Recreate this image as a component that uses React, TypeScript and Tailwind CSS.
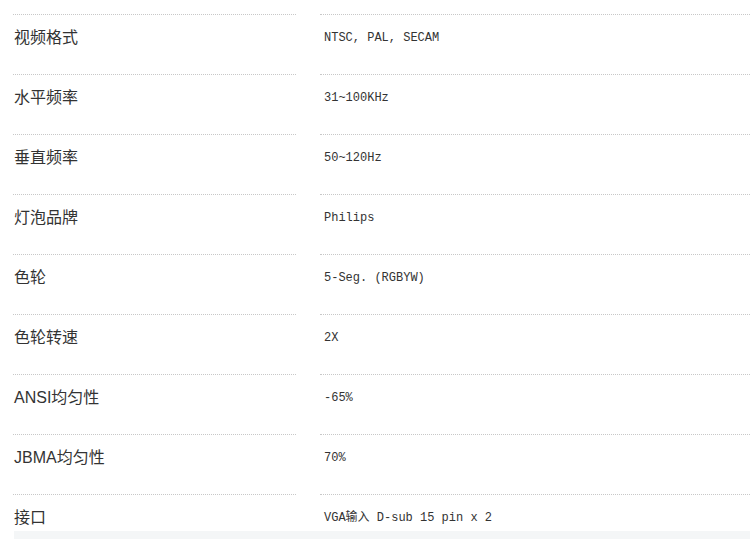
import React from "react";

interface ISpecRow {
    label: string;
    value: string;
}

const specs: ISpecRow[] = [
    { label: "视频格式", value: "NTSC, PAL, SECAM" },
    { label: "水平频率", value: "31~100KHz" },
    { label: "垂直频率", value: "50~120Hz" },
    { label: "灯泡品牌", value: "Philips" },
    { label: "色轮", value: "5-Seg. (RGBYW)" },
    { label: "色轮转速", value: "2X" },
    { label: "ANSI均匀性", value: "-65%" },
    { label: "JBMA均匀性", value: "70%" },
    { label: "接口", value: "VGA输入 D-sub 15 pin x 2" },
];

function SpecRow(props: ISpecRow & { last?: boolean }) {
    return (
        <div className="flex">
            <div
                className={
                    "w-[283px] ml-[13px] border-t border-dotted border-[#c8c8c8] " +
                    (props.last ? "h-[37px]" : "h-[60px]")
                }
            >
                <div className="pt-[14px] pl-[1px] text-[16px] leading-[18px] text-[#333]">
                    {props.label}
                </div>
            </div>
            <div
                className={
                    "flex-1 ml-[24px] border-t border-dotted border-[#c8c8c8] " +
                    (props.last ? "h-[37px]" : "h-[60px]")
                }
            >
                <div
                    className="pt-[16px] pl-[4px] text-[12px] leading-[14px] text-[#333]"
                    style={{ fontFamily: '"Liberation Mono", "Noto Sans CJK SC", monospace' }}
                >
                    {props.value}
                </div>
            </div>
        </div>
    );
}

export default function App() {
    return (
        <div
            className="w-[750px] h-[539px] overflow-hidden bg-white"
            style={{ fontFamily: '"Liberation Sans", "Noto Sans CJK SC", sans-serif' }}
        >
            <div className="h-[14px]"></div>
            {specs.map((spec, i) => (
                <SpecRow
                    key={spec.label}
                    label={spec.label}
                    value={spec.value}
                    last={i === specs.length - 1}
                />
            ))}
            <div className="ml-[14px] h-[20px] bg-[#f4f6f7]"></div>
        </div>
    );
}
